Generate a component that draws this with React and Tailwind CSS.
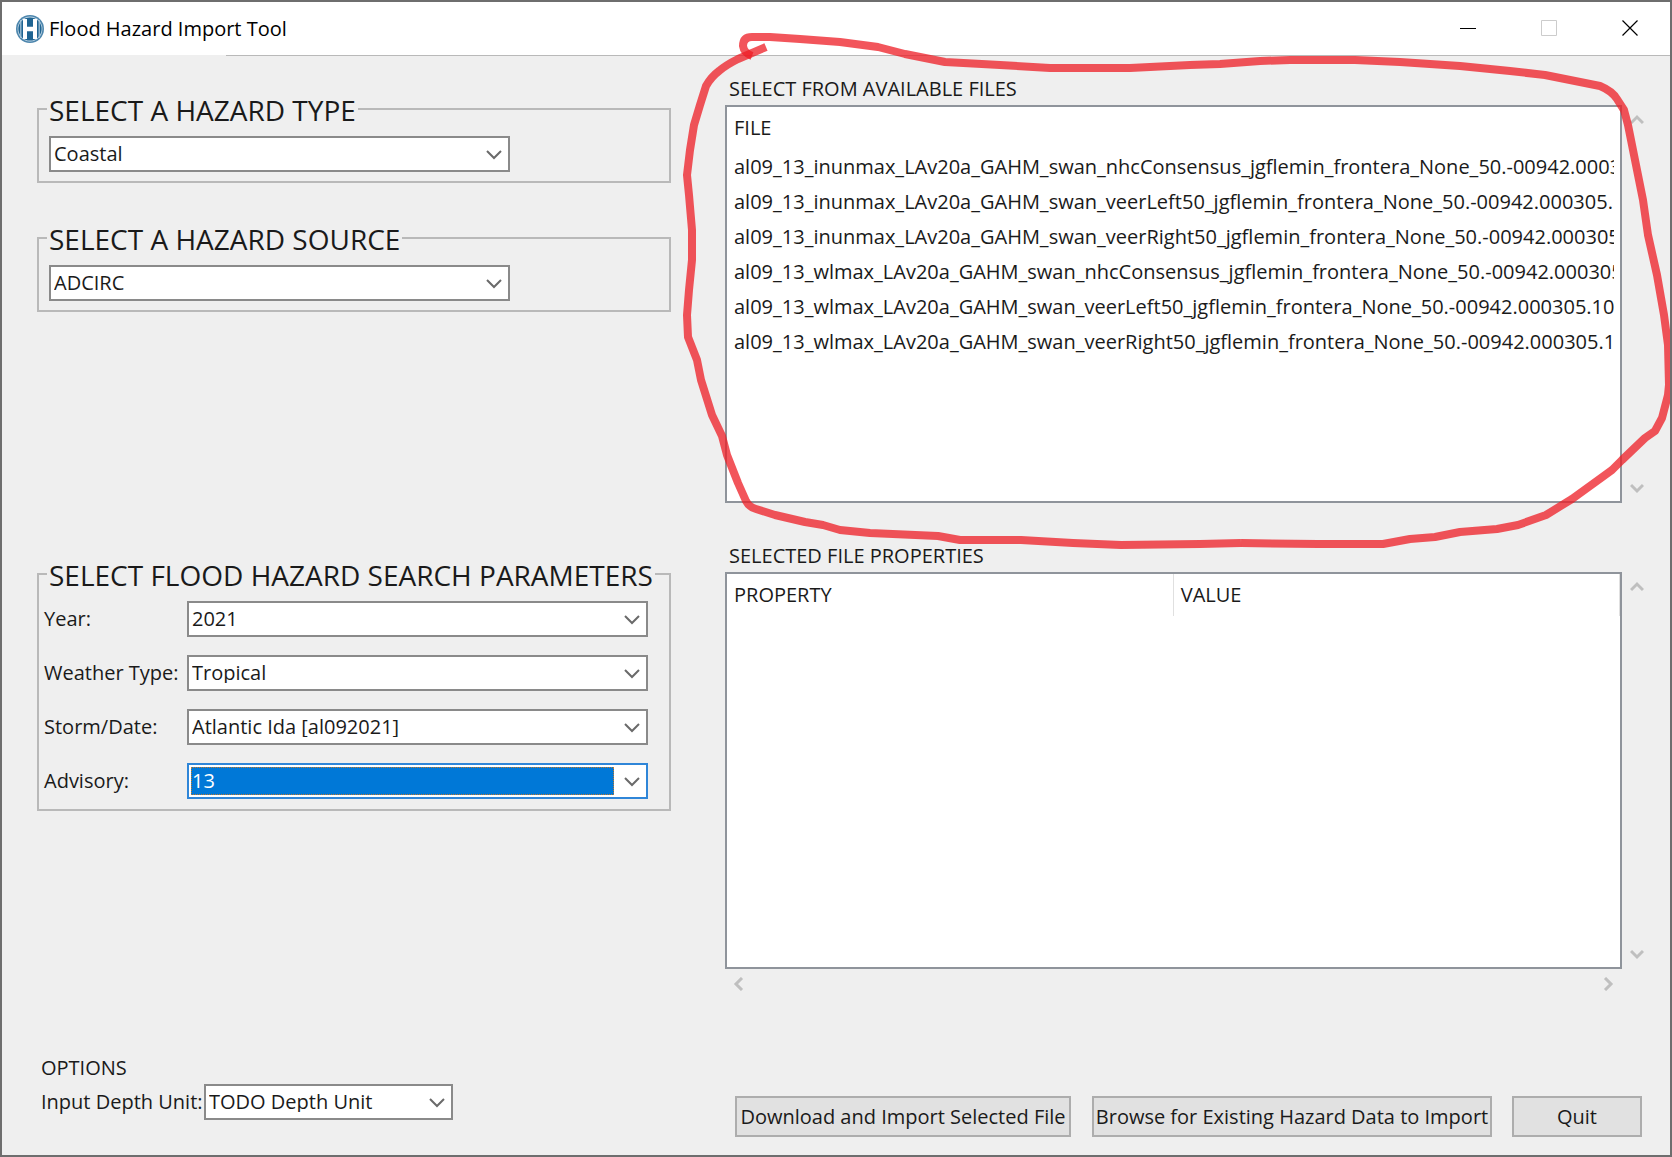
import React from "react";

const FILES = [
  "al09_13_inunmax_LAv20a_GAHM_swan_nhcConsensus_jgflemin_frontera_None_50.-00942.000305.1000",
  "al09_13_inunmax_LAv20a_GAHM_swan_veerLeft50_jgflemin_frontera_None_50.-00942.000305.1000",
  "al09_13_inunmax_LAv20a_GAHM_swan_veerRight50_jgflemin_frontera_None_50.-00942.000305.1000",
  "al09_13_wlmax_LAv20a_GAHM_swan_nhcConsensus_jgflemin_frontera_None_50.-00942.000305.1000",
  "al09_13_wlmax_LAv20a_GAHM_swan_veerLeft50_jgflemin_frontera_None_50.-00942.000305.1000",
  "al09_13_wlmax_LAv20a_GAHM_swan_veerRight50_jgflemin_frontera_None_50.-00942.000305.1000",
];

const PARAMETERS = [
  { id: "year", label: "Year:", value: "2021" },
  { id: "weather", label: "Weather Type:", value: "Tropical" },
  { id: "storm", label: "Storm/Date:", value: "Atlantic Ida [al092021]" },
  { id: "advisory", label: "Advisory:", value: "13", active: true },
];

function Logo() {
  return (
    <svg viewBox="0 0 28 28" className="size-7 shrink-0" aria-hidden="true">
      <circle cx="14" cy="14" r="14" fill="#4d86ad" />
      <circle cx="14" cy="14" r="12.4" fill="#c3d8e6" />
      <circle cx="14" cy="14" r="11.6" fill="#1f6492" />
      <path d="M4.8 5v18M23.2 5v18" stroke="#a9c6d9" strokeWidth="1.2" />
      <path d="M7 4h4v7.7h6V4h4v20h-4v-7.7h-6V24H7z" fill="#fff" />
    </svg>
  );
}

function Combo({ id, value, active, className, label }) {
  return (
    <div className={`relative h-9 bg-white p-0.5 border-2 ${active ? "border-[#2f86d8]" : "border-[#8a8a8a]"} ${className}`}>
      <select
        id={id}
        aria-label={label}
        defaultValue={value}
        className={
          active
            ? "block h-full w-[calc(100%-30px)] appearance-none border border-dotted border-[#c07a30] bg-[#0078d7] text-xl leading-none text-white outline-none"
            : "block h-full w-full appearance-none bg-white pl-px text-xl leading-none text-[#1a1a1a] outline-none"
        }
      >
        <option>{value}</option>
      </select>
      <svg viewBox="0 0 16 10" className="pointer-events-none absolute right-1.5 top-3 h-2.5 w-4" fill="none" aria-hidden="true">
        <path d="M1 1l7 7 7-7" stroke="#6a6a6a" strokeWidth="2" />
      </svg>
    </div>
  );
}

function Group({ title, children, className }) {
  return (
    <fieldset className={`min-w-0 border-2 border-[#b9b9b9] ${className}`}>
      <legend className="ml-2 whitespace-nowrap px-0.5 pt-0.5 text-[28px] leading-7">{title}</legend>
      {children}
    </fieldset>
  );
}

const ARROWS = {
  up: "M1 10l6-6 6 6",
  down: "M1 4l6 6 6-6",
  left: "M10 1L4 7l6 6",
  right: "M4 1l6 6-6 6",
};

function Arrow({ dir }) {
  return (
    <button type="button" aria-label={`Scroll ${dir}`} disabled className="block">
      <svg viewBox="0 0 14 14" className="size-3.5" fill="none" aria-hidden="true">
        <path d={ARROWS[dir]} stroke="#bfbfbf" strokeWidth="3" />
      </svg>
    </button>
  );
}

function ScrollPane({ children }) {
  return (
    <div className="flex min-h-0 flex-1 gap-2">
      <div className="min-w-0 flex-1 overflow-hidden border-2 border-[#8f949b] bg-white">{children}</div>
      <div className="flex w-4 flex-col justify-between py-2">
        <Arrow dir="up" />
        <Arrow dir="down" />
      </div>
    </div>
  );
}

function PushButton({ children, className }) {
  return (
    <button type="button" className={`h-[41px] whitespace-nowrap border-2 border-[#adadad] bg-[#e1e1e1] text-xl leading-none ${className}`}>
      {children}
    </button>
  );
}

export default function App() {
  return (
    <div className="relative flex min-h-screen flex-col overflow-hidden border-2 border-[#6e6e6e] bg-[#efefef] font-['Open_Sans',sans-serif] text-xl text-[#1a1a1a]">
      <header className="flex h-[53px] shrink-0 items-center bg-white pl-3.5">
        <Logo />
        <h1 className="flex-1 pl-[5px] text-xl text-black">Flood Hazard Import Tool</h1>
        <div className="flex items-center pb-0.5">
          <button type="button" aria-label="Minimize" className="grid h-12 w-[81px] place-items-center">
            <svg viewBox="0 0 16 16" className="size-4" fill="none"><path d="M0 8.5h16" stroke="#000" /></svg>
          </button>
          <button type="button" aria-label="Maximize" disabled className="grid h-12 w-[81px] place-items-center">
            <svg viewBox="0 0 16 16" className="size-4" fill="none"><path d="M.5 .5h15v15H.5z" stroke="#ccc" /></svg>
          </button>
          <button type="button" aria-label="Close" className="grid h-12 w-[81px] place-items-center">
            <svg viewBox="0 0 16 16" className="size-4" fill="none"><path d="M.5 .5l15 15M15.5 .5l-15 15" stroke="#000" strokeWidth="1.2" /></svg>
          </button>
        </div>
      </header>
      <div className="ml-56 h-px shrink-0 bg-[#b9b9b9]" />

      <main className="flex flex-1 pl-[35px]">
        <section className="flex w-[634px] shrink-0 flex-col pt-[38px]">
          <Group title="SELECT A HAZARD TYPE" className="h-[89px]">
            <div className="pl-2.5 pt-3">
              <Combo id="type" label="Hazard type" value="Coastal" className="w-[461px]" />
            </div>
          </Group>
          <Group title="SELECT A HAZARD SOURCE" className="mt-10 h-[89px]">
            <div className="pl-2.5 pt-3">
              <Combo id="source" label="Hazard source" value="ADCIRC" className="w-[461px]" />
            </div>
          </Group>
          <Group title="SELECT FLOOD HAZARD SEARCH PARAMETERS" className="mt-[247px] h-[252px]">
            <div className="flex flex-col gap-[18px] pl-[5px] pr-[21px] pt-3">
              {PARAMETERS.map((p) => (
                <div key={p.id} className="flex items-center">
                  <label htmlFor={p.id} className="w-[143px] shrink-0 whitespace-nowrap">{p.label}</label>
                  <Combo id={p.id} value={p.value} active={p.active} className="flex-1" />
                </div>
              ))}
            </div>
          </Group>
          <div className="mb-[35px] ml-1 mt-auto">
            <h2 className="leading-8">OPTIONS</h2>
            <div className="flex items-center gap-1">
              <label htmlFor="unit" className="w-[159px] whitespace-nowrap">Input Depth Unit:</label>
              <Combo id="unit" value="TODO Depth Unit" className="w-[249px]" />
            </div>
          </div>
        </section>

        <section className="ml-[54px] mr-6 flex min-w-0 flex-1 flex-col pt-[17px]">
          <h2 className="pl-1 leading-8">SELECT FROM AVAILABLE FILES</h2>
          <ScrollPane>
            <table className="w-full table-fixed border-collapse text-left">
              <thead>
                <tr><th className="h-[42px] pl-[7px] font-normal leading-8">FILE</th></tr>
              </thead>
              <tbody>
                {FILES.map((f) => (
                  <tr key={f}>
                    <td className="h-[35px] pl-[7px] pr-1.5">
                      <div className="overflow-hidden whitespace-nowrap leading-[35px]">{f}</div>
                    </td>
                  </tr>
                ))}
              </tbody>
            </table>
          </ScrollPane>
          <h2 className="mt-[37px] pl-1 leading-8">SELECTED FILE PROPERTIES</h2>
          <ScrollPane>
            <table className="w-full table-fixed border-collapse text-left">
              <thead>
                <tr>
                  <th className="h-[42px] border-r border-[#e0e0e0] pl-[7px] font-normal">PROPERTY</th>
                  <th className="h-[42px] border-r border-[#e0e0e0] pl-[7px] font-normal">VALUE</th>
                </tr>
              </thead>
            </table>
          </ScrollPane>
          <div className="mr-6 flex justify-between px-[7px] pt-2">
            <Arrow dir="left" />
            <Arrow dir="right" />
          </div>
          <div className="mb-[18px] mt-[105px] flex pl-2.5 pr-1">
            <PushButton className="w-[336px]">Download and Import Selected File</PushButton>
            <PushButton className="ml-[21px] w-[400px]">Browse for Existing Hazard Data to Import</PushButton>
            <PushButton className="ml-auto w-[130px]">Quit</PushButton>
          </div>
        </section>
      </main>

      <svg
        viewBox="0 0 1672 1157"
        preserveAspectRatio="none"
        className="pointer-events-none absolute -left-0.5 -top-0.5 h-[calc(100%+4px)] w-[calc(100%+4px)]"
        fill="none"
        stroke="#ed1c24"
        strokeOpacity="0.75"
        strokeWidth="8"
        strokeLinejoin="round"
        aria-hidden="true"
      >
        <path d="M752 56Q744 53 743 46Q743 37 752 37L770 37L800 39L840 42L878 47L905 54L945 62L1000 65L1050 68L1130 68L1190 65L1220 64L1260 61L1290 60L1355 60L1400 62L1460 66L1510 71L1545 75L1585 83L1600 86Q1612 91 1617 99L1624 110L1628 125L1636 165L1643 200L1648 235L1657 275L1664 315L1668 345L1669 385L1668 395L1662 418L1655 431L1645 438L1622 460L1612 470L1601 478L1572 499L1546 515L1518 525L1497 529L1460 532L1435 537L1410 539L1383 544L1318 544L1241 543" />
        <path d="M1241 543L1200 544L1121 545L1073 543L1021 540L960 540L938 536L870 533L840 530L823 525L805 522L775 515L756 509Q749 507 746 501L738 483L727 455L722 436L712 415L701 380L697 360L688 337L687 315L689 290L692 260L692 230L689 195L687 175L690 150L694 125L700 105L706 86Q711 77 719 71Q726 65 738 59L766 47" />
      </svg>
    </div>
  );
}
